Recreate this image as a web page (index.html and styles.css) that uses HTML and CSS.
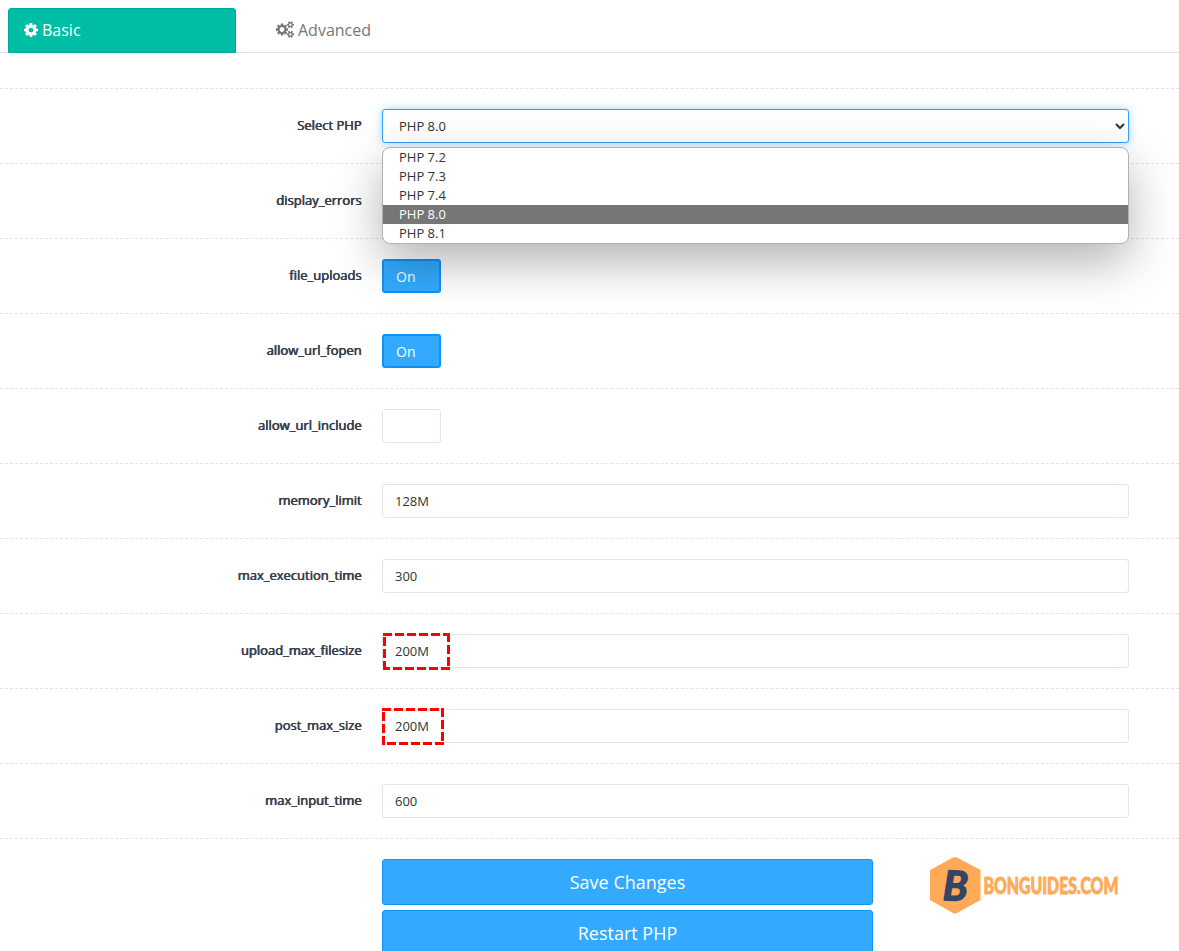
FILE: index.html
```html
<!DOCTYPE html>
<html lang="en">
<head>
<meta charset="utf-8">
<meta name="viewport" content="width=device-width, initial-scale=1.0">
<title>PHP Settings</title>
<link rel="stylesheet" href="styles.css">
</head>
<body>
<nav class="tabs">
  <a class="tab active" href="#basic">
    <svg class="icon-cog" viewBox="0 128 1536 1536"><path d="M1024 896q0-106-75-181t-181-75-181 75-75 181 75 181 181 75 181-75 75-181zm512-109v222q0 12-8 23t-20 13l-185 28q-19 54-39 91 35 50 107 138 10 12 10 25t-9 23q-27 37-99 108t-94 71q-12 0-26-9l-138-108q-44 23-91 38-16 136-29 186-7 28-36 28h-222q-14 0-24.500-8.500t-11.500-21.500l-28-184q-49-16-90-37l-141 107q-10 9-25 9-14 0-25-11-126-114-165-168-7-10-7-23 0-12 8-23 15-21 51-66.500t54-70.500q-27-50-41-99l-183-27q-13-2-21-12.500t-8-23.500v-222q0-12 8-23t19-13l186-28q14-46 39-92-40-57-107-138-10-12-10-24 0-10 9-23 26-36 98.500-107.500t94.500-71.500q13 0 26 10l138 107q44-23 91-38 16-136 29-186 7-28 36-28h222q14 0 24.500 8.500t11.500 21.500l28 184q49 16 90 37l142-107q9-9 24-9 13 0 25 10 129 119 165 170 7 8 7 22 0 12-8 23-15 21-51 66.500t-54 70.500q26 50 41 98l183 28q13 2 21 12.500t8 23.500z"/></svg>
    <span>Basic</span>
  </a>
  <a class="tab" href="#advanced">
    <svg class="icon-cogs" viewBox="0 0 1920 1792">
      <path d="M896 896q0-106-75-181t-181-75-181 75-75 181 75 181 181 75 181-75 75-181zM1280 805v185q0 10-7 19.500t-16 10.500l-155 24q-11 35-32 76 34 48 90 115 7 11 7 20 0 12-7 19-23 30-82.500 89.500t-78.500 59.500q-11 0-21-7l-115-90q-37 19-77 31-11 108-23 155-7 24-30 24h-186q-11 0-20-7.500t-10-17.500l-23-153q-34-10-75-31l-118 89q-7 7-20 7-11 0-21-8-144-133-144-160 0-9 7-19 10-14 41-53t47-61q-23-44-35-82l-152-24q-10-1-17-9.500t-7-19.500v-185q0-10 7-19.500t16-10.500l155-24q11-35 32-76-34-48-90-115-7-11-7-20 0-12 7-20 22-30 82-89t79-59q11 0 21 7l115 90q34-18 77-32 11-108 23-154 7-24 30-24h186q11 0 20 7.500t10 17.500l23 153q34 10 75 31l118-89q8-7 20-7 11 0 21 8 144 133 144 160 0 8-7 19-12 16-42 54t-45 60q23 48 34 82l152 23q10 2 17 10.500t7 19.500z"/>
      <path id="small-cog" d="M1664 1408q0-52-38-90t-90-38-90 38-38 90q0 53 37.500 90.500t90.500 37.500 90.500-37.500 37.500-90.500zM1920 1338v140q0 16-149 31-12 27-30 52 51 113 51 138 0 4-4 7-122 71-124 71-8 0-46-47t-52-68q-20 2-30 2t-30-2q-14 21-52 68t-46 47q-2 0-124-71-4-3-4-7 0-25 51-138-18-25-30-52-149-15-149-31v-140q0-16 149-31 13-29 30-52-51-113-51-138 0-4 4-7 4-2 35-20t59-34 30-16q8 0 46 46.500t52 67.500q20-2 30-2t30 2q51-71 92-112l6-2q4 0 124 70 4 3 4 7 0 25-51 138 17 23 30 52 149 15 149 31z"/>
      <use href="#small-cog" y="-1024"/>
    </svg>
    <span>Advanced</span>
  </a>
</nav>

<form class="settings">
  <div class="row">
    <label class="name">Select PHP</label>
    <div class="field">
      <select class="control version">
        <option>PHP 8.0</option>
      </select>
      <ul class="options">
        <li>PHP 7.2</li>
        <li>PHP 7.3</li>
        <li>PHP 7.4</li>
        <li class="selected">PHP 8.0</li>
        <li>PHP 8.1</li>
      </ul>
    </div>
  </div>
  <div class="row">
    <label class="name">display_errors</label>
    <div class="field"></div>
  </div>
  <div class="row">
    <label class="name">file_uploads</label>
    <div class="field"><span class="switch on">On</span></div>
  </div>
  <div class="row">
    <label class="name">allow_url_fopen</label>
    <div class="field"><span class="switch on">On</span></div>
  </div>
  <div class="row">
    <label class="name">allow_url_include</label>
    <div class="field"><span class="switch"></span></div>
  </div>
  <div class="row">
    <label class="name">memory_limit</label>
    <div class="field"><input class="control" type="text" value="128M"></div>
  </div>
  <div class="row">
    <label class="name">max_execution_time</label>
    <div class="field"><input class="control" type="text" value="300"></div>
  </div>
  <div class="row">
    <label class="name">upload_max_filesize</label>
    <div class="field"><input class="control" type="text" value="200M">
      <svg class="mark mark-upload" viewBox="0 0 67 37"><path d="M0 1.500H67M65.500 0V37M67 35.500H0M1.500 37V0"/></svg>
    </div>
  </div>
  <div class="row">
    <label class="name">post_max_size</label>
    <div class="field"><input class="control" type="text" value="200M">
      <svg class="mark mark-post" viewBox="0 0 62 37"><path d="M0 1.500H62M60.500 0V37M62 35.500H0M1.500 37V0"/></svg>
    </div>
  </div>
  <div class="row">
    <label class="name">max_input_time</label>
    <div class="field"><input class="control" type="text" value="600"></div>
  </div>
  <div class="row actions">
    <div class="buttons">
      <button class="btn" type="button">Save Changes</button>
      <button class="btn" type="button">Restart PHP</button>
    </div>
    <svg class="brand" width="210" height="60" viewBox="0 0 210 60">
      <path d="M24 1.500Q26 .5 28 1.500L51.500 14V44L28 57Q26 58.500 24 57L1 44V14Z"/>
      <text class="brand-letter" x="14" y="44.500" textLength="25" lengthAdjust="spacingAndGlyphs" transform="rotate(2 26 30)">B</text>
      <text class="brand-name" x="54.500" y="37.500" textLength="135" lengthAdjust="spacingAndGlyphs">BONGUIDES.COM</text>
    </svg>
  </div>
</form>
</body>
</html>
```
FILE: styles.css
```css
* {
  box-sizing: border-box;
}
body {
  margin: 0;
  height: 951px;
  overflow: hidden;
  background: #fff;
  color: #333;
  font-family: "Open Sans", sans-serif;
  font-size: 13px;
}
.tabs {
  display: flex;
  height: 53px;
  padding: 8px 8px 0;
  gap: 24px;
  border-bottom: 1px solid #dfe5ef;
}
.tab {
  display: flex;
  align-items: center;
  gap: 4px;
  width: 228px;
  height: 45px;
  padding: 0 15px 2px;
  border: 1px solid transparent;
  border-radius: 3px 3px 0 0;
  color: #777;
  font-size: 16px;
  text-decoration: none;
}
.tab.active {
  background: #00bda5;
  border-color: #00a995;
  color: #fff;
}
.tab svg {
  fill: currentColor;
}
.icon-cog {
  width: 14px;
  height: 14px;
}
.icon-cogs {
  width: 18px;
  height: 17px;
}
.settings {
  margin: 35px 0 0;
}
.row {
  display: flex;
  align-items: flex-start;
  height: 75px;
  padding: 20px 50px 20px 0;
  border-top: 1px dashed #dfe5ea;
}
.name {
  width: 362px;
  margin-right: 20px;
  padding-top: 7px;
  line-height: 18px;
  color: #394150;
  text-align: right;
  text-shadow: -.6px 0 #394150, -.3px 0 #394150;
}
.field {
  position: relative;
  flex: 1;
  height: 34px;
}
.control {
  display: block;
  width: 100%;
  height: 34px;
  margin: 0;
  padding: 6px 12px;
  border: 1px solid #dfe5ef;
  border-radius: 3px;
  background: #fff;
  color: #333;
  font-family: inherit;
  font-size: 13px;
  outline: none;
}
.version {
  border-color: #33a0ff;
  box-shadow: 0 0 8px rgba(51, 160, 255, .45);
}
.options {
  position: absolute;
  top: 38px;
  left: 0;
  z-index: 5;
  width: 100%;
  margin: 0;
  padding: 0;
  list-style: none;
  overflow: hidden;
  background: #fff;
  border: 1px solid #b0b0b0;
  border-radius: 8px;
  box-shadow: 0 18px 48px rgba(0, 0, 0, .3);
}
.options li {
  height: 19px;
  padding-left: 16px;
  line-height: 19px;
}
.options .selected {
  background: #767676;
  color: #fff;
}
.switch {
  display: block;
  width: 59px;
  height: 34px;
  padding-left: 13px;
  border: 1px solid #dfe5ef;
  border-radius: 3px;
  line-height: 34px;
}
.switch.on {
  padding-left: 12px;
  border: 2px solid #0b93fb;
  background: #33aaff;
  color: #fff;
  font-size: 14px;
  line-height: 32px;
}
.mark {
  position: absolute;
  top: -1px;
  height: 37px;
  fill: none;
  stroke: #f00;
  stroke-width: 3;
  stroke-dasharray: 9 3;
}
.mark-upload {
  left: 1px;
  width: 67px;
}
.mark-post {
  left: 0;
  width: 62px;
}
.actions {
  height: 120px;
  padding-left: 382px;
  padding-right: 0;
}
.buttons {
  display: flex;
  flex-direction: column;
  gap: 5px;
  width: 491px;
}
.btn {
  height: 46px;
  border: 1px solid #0b97fa;
  border-radius: 3px;
  background: #33aaff;
  color: #fff;
  font-family: inherit;
  font-size: 18px;
}
.brand {
  margin: -3px 0 0 56px;
  fill: #ffaa56;
}
.brand-letter {
  fill: #344563;
  stroke: #344563;
  stroke-width: 1.5;
  stroke-linejoin: round;
  font: italic 700 41px Lato, sans-serif;
}
.brand-name {
  stroke: #ffaa56;
  stroke-width: .9;
  font: 900 22px Lato, sans-serif;
}
```
